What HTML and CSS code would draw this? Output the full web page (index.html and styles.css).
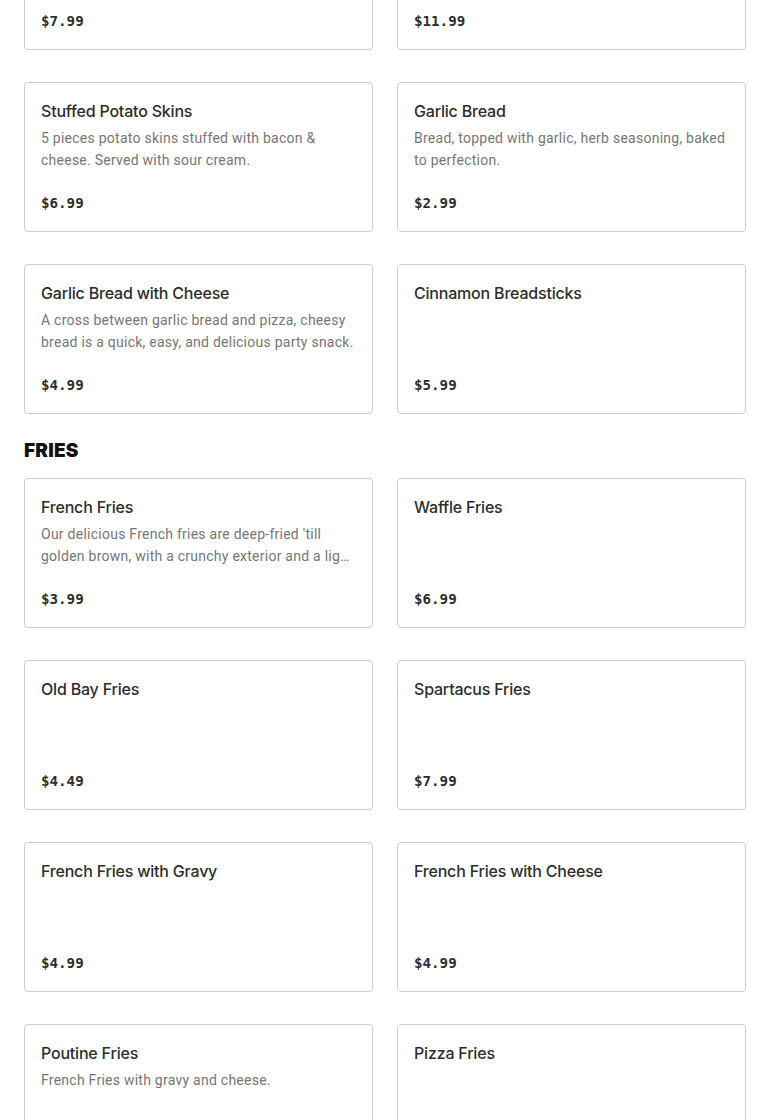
FILE: index.html
```html
<!DOCTYPE html>
<html>
<head>
<meta charset="utf-8">
<link rel="stylesheet" href="styles.css">
</head>
<body>
<main class="menu">
  <section class="section first">
    <div class="grid">
      <div class="card"><div class="title">Mozzarella Sticks</div><div class="desc">6 pieces breaded mozzarella sticks served with marinara sauce.</div><div class="price">$7.99</div></div>
      <div class="card"><div class="title">Chicken Wings</div><div class="desc">10 pieces crispy chicken wings tossed in your choice of sauce.</div><div class="price">$11.99</div></div>
      <div class="card"><div class="title">Stuffed Potato Skins</div><div class="desc">5 pieces potato skins stuffed with bacon &amp; cheese. Served with sour cream.</div><div class="price">$6.99</div></div>
      <div class="card"><div class="title">Garlic Bread</div><div class="desc">Bread, topped with garlic, herb seasoning, baked to perfection.</div><div class="price">$2.99</div></div>
      <div class="card"><div class="title">Garlic Bread with Cheese</div><div class="desc">A cross between garlic bread and pizza, cheesy bread is a quick, easy, and delicious party snack.</div><div class="price">$4.99</div></div>
      <div class="card"><div class="title">Cinnamon Breadsticks</div><div class="desc"></div><div class="price">$5.99</div></div>
    </div>
  </section>
  <section class="section">
    <h2 class="heading">FRIES</h2>
    <div class="grid">
      <div class="card"><div class="title">French Fries</div><div class="desc">Our delicious French fries are deep-fried 'till golden brown, with a crunchy exterior and a light, fluffy interior.</div><div class="price">$3.99</div></div>
      <div class="card"><div class="title">Waffle Fries</div><div class="desc"></div><div class="price">$6.99</div></div>
      <div class="card"><div class="title">Old Bay Fries</div><div class="desc"></div><div class="price">$4.49</div></div>
      <div class="card"><div class="title">Spartacus Fries</div><div class="desc"></div><div class="price">$7.99</div></div>
      <div class="card"><div class="title">French Fries with Gravy</div><div class="desc"></div><div class="price">$4.99</div></div>
      <div class="card"><div class="title">French Fries with Cheese</div><div class="desc"></div><div class="price">$4.99</div></div>
      <div class="card"><div class="title">Poutine Fries</div><div class="desc">French Fries with gravy and cheese.</div><div class="price">$5.99</div></div>
      <div class="card"><div class="title">Pizza Fries</div><div class="desc"></div><div class="price">$6.99</div></div>
    </div>
  </section>
</main>
</body>
</html>
```

FILE: styles.css
```css
html, body {
  margin: 0;
  padding: 0;
  background: #ffffff;
}
body {
  font-family: "Inter", "Roboto", sans-serif;
  color: #2d2d2d;
  overflow: hidden;
  height: 1120px;
}
.menu {
  padding: 0 24px;
}
.section.first {
  margin-top: -100px;
}
.heading {
  margin: 25px 0 15px;
  font-family: "Inter", sans-serif;
  font-weight: 900;
  font-size: 19px;
  line-height: 24px;
  color: #111111;
  letter-spacing: 0.2px;
}
.grid {
  display: grid;
  grid-template-columns: 1fr 1fr;
  column-gap: 24px;
  row-gap: 32px;
}
.card {
  border: 1px solid #cccccc;
  border-radius: 4px;
  padding: 16px;
  display: flex;
  flex-direction: column;
  height: 150px;
  box-sizing: border-box;
}
.title {
  font-size: 16px;
  line-height: 24px;
  font-weight: 500;
  letter-spacing: -0.2px;
  color: #2d2d2d;
}
.desc {
  margin-top: 4px;
  font-family: "Roboto", sans-serif;
  font-size: 14px;
  letter-spacing: 0.25px;
  line-height: 22px;
  color: #767676;
  height: 44px;
  overflow: hidden;
  display: -webkit-box;
  -webkit-line-clamp: 2;
  -webkit-box-orient: vertical;
}
.price {
  margin-top: 21px;
  font-family: "DejaVu Sans Mono", monospace;
  font-weight: bold;
  font-size: 14.2px;
  line-height: 24px;
  color: #2d2d2d;
}
```
